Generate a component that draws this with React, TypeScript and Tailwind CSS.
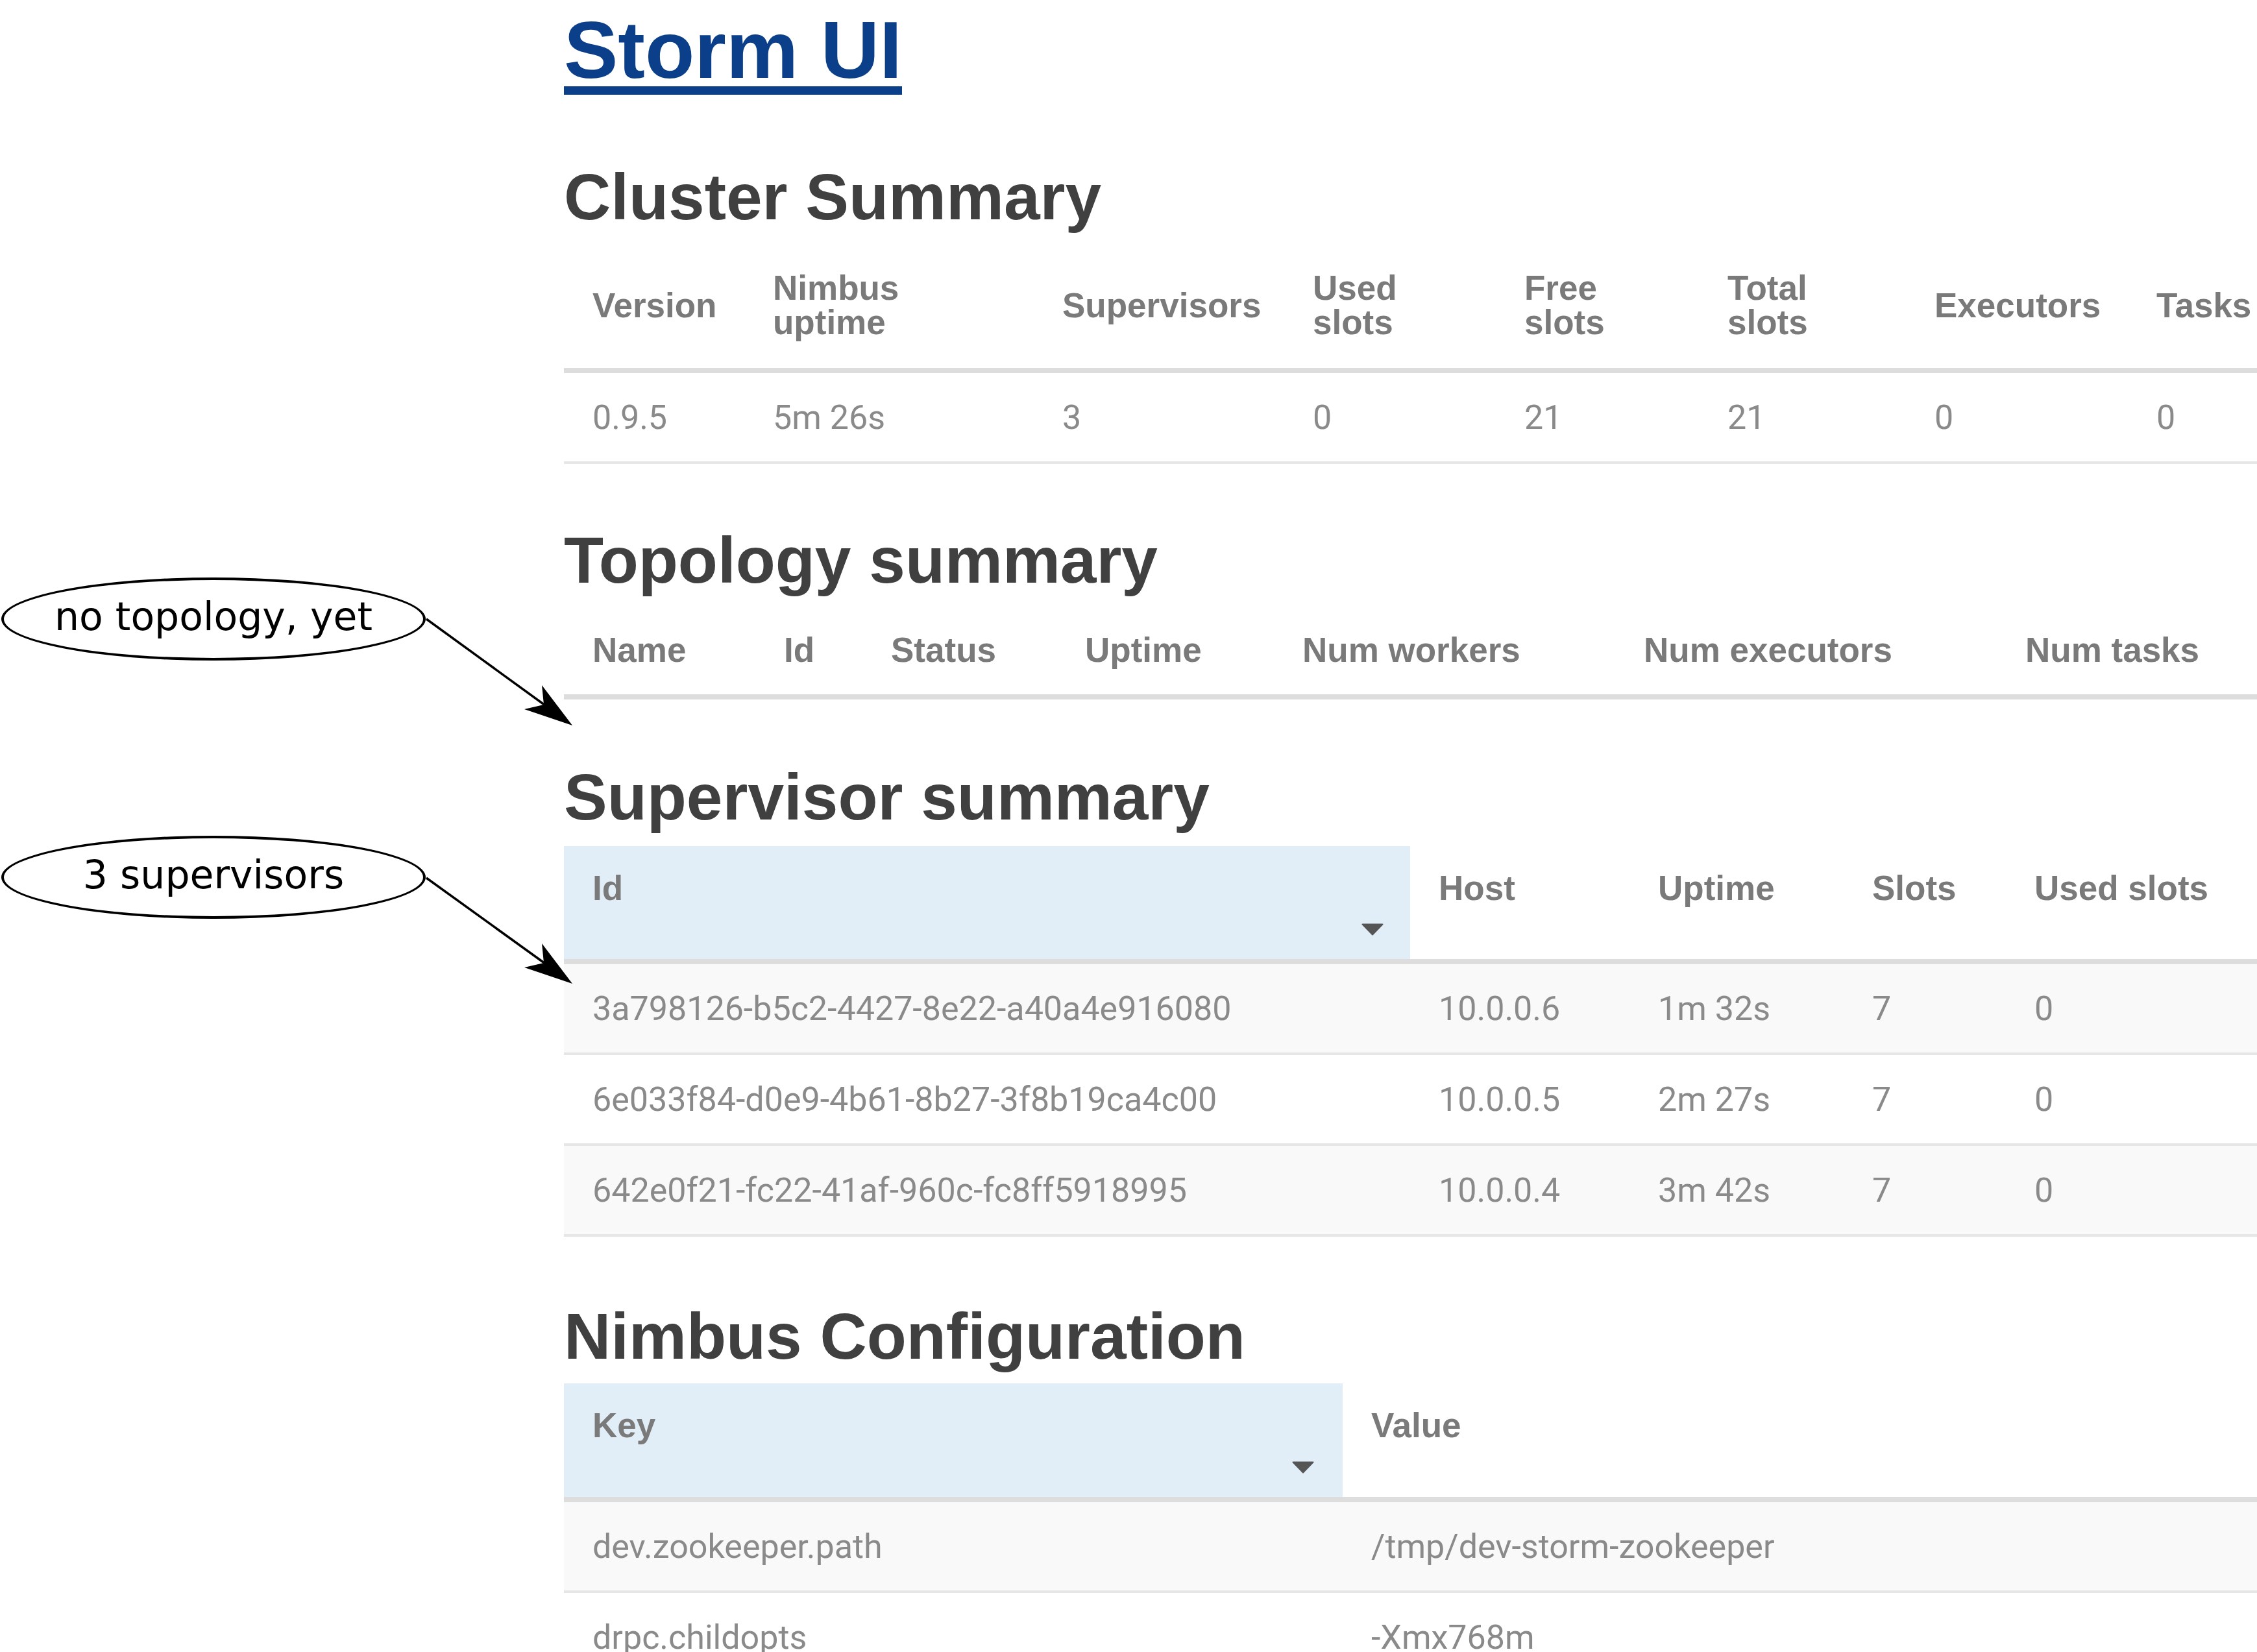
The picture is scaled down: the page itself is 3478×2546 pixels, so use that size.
import React from "react";

const HEAD =
  "font-['Liberation_Sans',Arial,sans-serif] text-[53px] font-bold leading-[53px] text-[#7a7a7a] whitespace-nowrap";
const CELL =
  "font-['Roboto','Liberation_Sans',sans-serif] text-[52px] leading-[55px] text-[#8a8a8a] whitespace-nowrap";
const H2 =
  "font-['Liberation_Sans',Arial,sans-serif] text-[100px] font-bold leading-[110px] text-[#404040] whitespace-nowrap";

function SortArrow({ className }: { className: string }) {
  return (
    <svg width="34" height="19" viewBox="0 0 34 19" className={className}>
      <path
        d="M1.5 1.5 H32.5 L17 17.5 Z"
        fill="#555555"
        stroke="#555555"
        strokeWidth="2"
        strokeLinejoin="round"
      />
    </svg>
  );
}

type Col = { w: string };

function BodyRow({
  cols,
  cells,
  striped,
}: {
  cols: Col[];
  cells: string[];
  striped: boolean;
}) {
  return (
    <div
      className={
        striped
          ? "flex border-b-[4px] border-[#e6e6e6] bg-[#f9f9f9] pt-[41px] pb-[40px]"
          : "flex border-b-[4px] border-[#e6e6e6] bg-white pt-[41px] pb-[40px]"
      }
    >
      {cells.map((c, i) => (
        <div key={i} className={`${cols[i].w} pl-[44px] ${CELL}`}>
          {c}
        </div>
      ))}
    </div>
  );
}

const clusterCols: Col[] = [
  { w: "w-[278px] shrink-0" },
  { w: "w-[446px] shrink-0" },
  { w: "w-[386px] shrink-0" },
  { w: "w-[326px] shrink-0" },
  { w: "w-[313px] shrink-0" },
  { w: "w-[319px] shrink-0" },
  { w: "w-[342px] shrink-0" },
  { w: "flex-1" },
];
const clusterHeads: React.ReactNode[] = [
  "Version",
  <>
    Nimbus
    <br />
    uptime
  </>,
  "Supervisors",
  <>
    Used
    <br />
    slots
  </>,
  <>
    Free
    <br />
    slots
  </>,
  <>
    Total
    <br />
    slots
  </>,
  "Executors",
  "Tasks",
];

const topoCols: Col[] = [
  { w: "w-[295px] shrink-0" },
  { w: "w-[165px] shrink-0" },
  { w: "w-[299px] shrink-0" },
  { w: "w-[335px] shrink-0" },
  { w: "w-[526px] shrink-0" },
  { w: "w-[588px] shrink-0" },
  { w: "flex-1" },
];
const topoHeads = [
  "Name",
  "Id",
  "Status",
  "Uptime",
  "Num workers",
  "Num executors",
  "Num tasks",
];

const supCols: Col[] = [
  { w: "w-[1304px] shrink-0" },
  { w: "w-[338px] shrink-0" },
  { w: "w-[330px] shrink-0" },
  { w: "w-[250px] shrink-0" },
  { w: "flex-1" },
];
const supRows = [
  ["3a798126-b5c2-4427-8e22-a40a4e916080", "10.0.0.6", "1m 32s", "7", "0"],
  ["6e033f84-d0e9-4b61-8b27-3f8b19ca4c00", "10.0.0.5", "2m 27s", "7", "0"],
  ["642e0f21-fc22-41af-960c-fc8ff5918995", "10.0.0.4", "3m 42s", "7", "0"],
];

const confCols: Col[] = [{ w: "w-[1200px] shrink-0" }, { w: "flex-1" }];
const confRows = [
  ["dev.zookeeper.path", "/tmp/dev-storm-zookeeper"],
  ["drpc.childopts", "-Xmx768m"],
];

function Annotations() {
  return (
    <>
      <div className="absolute left-[2px] top-[890px] flex h-[128px] w-[654px] items-center justify-center rounded-[50%] border-[4px] border-black bg-white pb-[8px]">
        <span className="font-['DejaVu_Sans',sans-serif] text-[60px] leading-[60px] text-black whitespace-nowrap">
          no topology, yet
        </span>
      </div>
      <div className="absolute left-[2px] top-[1288px] flex h-[128px] w-[654px] items-center justify-center rounded-[50%] border-[4px] border-black bg-white pb-[8px]">
        <span className="font-['DejaVu_Sans',sans-serif] text-[60px] leading-[60px] text-black whitespace-nowrap">
          3 supervisors
        </span>
      </div>
      <svg
        className="pointer-events-none absolute left-0 top-0"
        width="900"
        height="1600"
        viewBox="0 0 900 1600"
      >
        <line x1="657" y1="954" x2="840" y2="1087" stroke="#000" strokeWidth="3.5" />
        <polygon points="882,1118 835,1056 838,1086 808,1093" fill="#000" />
        <line x1="657" y1="1353" x2="840" y2="1485" stroke="#000" strokeWidth="3.5" />
        <polygon points="882,1516 835,1454 838,1484 808,1491" fill="#000" />
      </svg>
    </>
  );
}

export default function App() {
  return (
    <div className="relative h-[2546px] w-[3478px] overflow-hidden bg-white">
      <div className="w-[2750px] pl-[869px] pt-[20px] box-content">
        <h1>
          <a
            href="#"
            className="block w-fit border-b-[13px] border-[#0b3f8a] font-['Liberation_Sans',Arial,sans-serif] text-[125px] font-bold leading-[113px] text-[#0b3f8a]"
          >
            Storm UI
          </a>
        </h1>

        {/* Cluster Summary */}
        <h2 className={`mt-[102px] ${H2}`}>Cluster Summary</h2>
        <div className="mt-[21px]">
          <div className="flex h-[196px] items-center border-b-[8px] border-[#dddddd] pb-[6px]">
            {clusterHeads.map((h, i) => (
              <div key={i} className={`${clusterCols[i].w} pl-[44px] ${HEAD}`}>
                {h}
              </div>
            ))}
          </div>
          <BodyRow
            cols={clusterCols}
            cells={["0.9.5", "5m 26s", "3", "0", "21", "21", "0", "0"]}
            striped={false}
          />
        </div>

        {/* Topology summary */}
        <h2 className={`mt-[93px] ${H2}`}>Topology summary</h2>
        <div className="mt-[19px]">
          <div className="flex h-[141px] items-start border-b-[8px] border-[#dddddd] pt-[38px]">
            {topoHeads.map((h, i) => (
              <div key={i} className={`${topoCols[i].w} pl-[44px] ${HEAD}`}>
                {h}
              </div>
            ))}
          </div>
        </div>

        {/* Supervisor summary */}
        <h2 className={`mt-[95px] ${H2}`}>Supervisor summary</h2>
        <div className="mt-[21px]">
          <div className="flex h-[182px] border-b-[8px] border-[#dddddd]">
            <div
              className={`${supCols[0].w} flex flex-col justify-between bg-[#e1edf7] pt-[38px] pb-[36px] pl-[44px] pr-[41px]`}
            >
              <div className={HEAD}>Id</div>
              <SortArrow className="block self-end" />
            </div>
            <div className={`${supCols[1].w} pt-[38px] pl-[44px] ${HEAD}`}>Host</div>
            <div className={`${supCols[2].w} pt-[38px] pl-[44px] ${HEAD}`}>Uptime</div>
            <div className={`${supCols[3].w} pt-[38px] pl-[44px] ${HEAD}`}>Slots</div>
            <div className={`${supCols[4].w} pt-[38px] pl-[44px] ${HEAD}`}>Used slots</div>
          </div>
          {supRows.map((r, i) => (
            <BodyRow key={i} cols={supCols} cells={r} striped={i % 2 === 0} />
          ))}
        </div>

        {/* Nimbus Configuration */}
        <h2 className={`mt-[98px] ${H2}`}>Nimbus Configuration</h2>
        <div className="mt-[18px]">
          <div className="flex h-[183px] border-b-[8px] border-[#dddddd]">
            <div
              className={`${confCols[0].w} flex flex-col justify-between bg-[#e1edf7] pt-[38px] pb-[36px] pl-[44px] pr-[44px]`}
            >
              <div className={HEAD}>Key</div>
              <SortArrow className="block self-end" />
            </div>
            <div className={`${confCols[1].w} pt-[38px] pl-[44px] ${HEAD}`}>Value</div>
          </div>
          {confRows.map((r, i) => (
            <BodyRow key={i} cols={confCols} cells={r} striped={i % 2 === 0} />
          ))}
        </div>
      </div>

      <Annotations />
    </div>
  );
}
